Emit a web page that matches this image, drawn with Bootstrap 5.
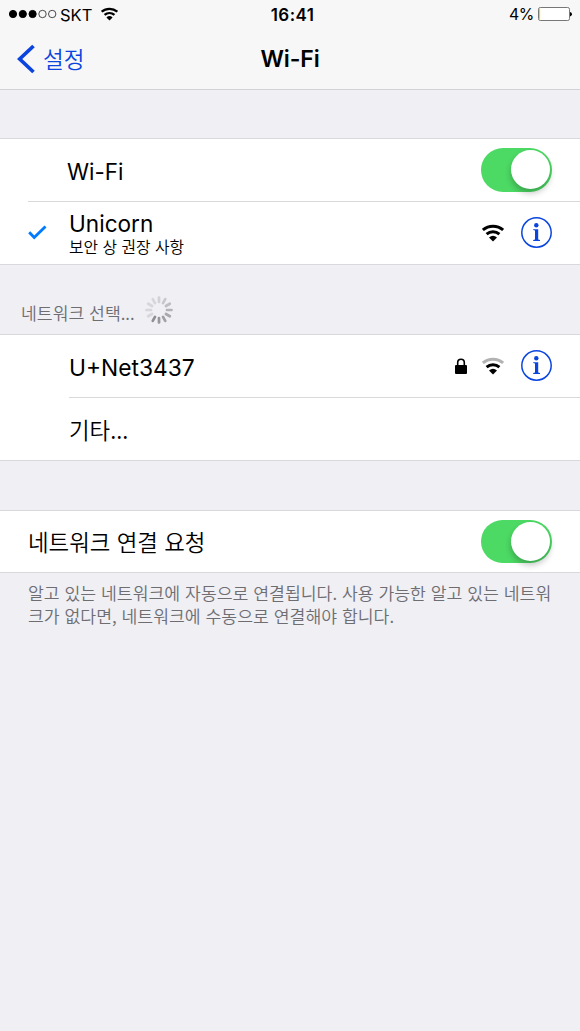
<!DOCTYPE html>
<html lang="ko">
<head>
<meta charset="utf-8">
<meta name="viewport" content="width=device-width, initial-scale=1">
<title>Wi-Fi</title>
<link href="https://cdn.jsdelivr.net/npm/bootstrap@5.3.0/dist/css/bootstrap.min.css" rel="stylesheet">
<style>
body{background:#efeff4;color:#000;font-family:Inter,"Noto Sans CJK KR",sans-serif;overflow:hidden}
svg{display:block;flex:none}
.ko{font-family:"Noto Sans CJK KR DemiLight","Noto Sans CJK KR",sans-serif;font-weight:350}
.topbar{height:90px;background:#f7f7f7;border-bottom:1px solid #d2d2d4}
.status{height:28px;line-height:28px}
.status>div,.titlebar>div{flex:1 1 0}
.carrier{font-size:16.5px;padding-top:1px}
.clock{font-size:17px;letter-spacing:.4px;padding:2px 0 0 5px}
.percent{font-size:15.8px;letter-spacing:-.3px;padding-top:2px}
.titlebar{height:61px;line-height:61px}
.back{color:#0a45e0;font-size:22.5px;text-decoration:none}
.heading{font-size:23px;font-weight:600;letter-spacing:-.1px;padding-top:2px}
.group{background:#fff;border-top:1px solid #d9d9dd;border-bottom:1px solid #d9d9dd;margin-bottom:0}
.cell{height:62px}
.cell-body{border-top:1px solid #d9d9db;height:63px}
.title{font-size:23px;line-height:28px}
.latin{padding-top:4px}
.check-col{width:41px}
.toggle{width:71.5px;height:43.5px;border-radius:22px;background:#4cd964;padding:2.2px;flex:none}
.knob{width:39px;height:39px;border-radius:50%;background:#fff;box-shadow:0 4px 6px rgba(0,0,0,.24)}
.section-title{font-size:17.2px;line-height:24px;color:#6d6d72}
.note{font-size:17.23px;line-height:22.5px;color:#6d6d72}
.end-icon{margin:-1px 28px 0 17px}
</style>
</head>
<body>
<svg width="0" height="0" class="position-absolute">
  <defs>
    <g id="waves" fill="none" stroke-width="3">
      <path d="M4.6 10.2a9.8 9.8 0 0 1 12.8 0"/>
      <path d="M11 17.4 7 13.5q4-3.6 8 0Z" fill="#000" stroke="none"/>
    </g>
    <path id="outer" d="M.9 6a15.4 15.4 0 0 1 20.2 0" fill="none" stroke-width="2.9"/>
    <g id="info">
      <circle cx="15.5" cy="15.5" r="14.7" fill="none" stroke="#0a45e0" stroke-width="1.5"/>
      <circle cx="15.3" cy="8.3" r="2.2" fill="#0a45e0"/>
      <path d="M12.2 12.2h5v10.4l1.8.5v.9h-6.8v-.9l1.8-.5v-9l-1.8-.5Z" fill="#0a45e0"/>
    </g>
  </defs>
</svg>

<header class="topbar">
  <div class="status d-flex align-items-center">
    <div class="d-flex align-items-center">
      <svg width="60" height="28" viewBox="0 0 60 28"><g stroke="#000"><g><circle cx="13" cy="14" r="3.6"/><circle cx="22.8" cy="14" r="3.6"/><circle cx="32.6" cy="14" r="3.6"/></g><g fill="none" stroke-width=".7"><circle cx="42.5" cy="14" r="3.7"/><circle cx="52.2" cy="14" r="3.7"/></g></g></svg>
      <span class="carrier">SKT</span>
      <svg style="margin-left:9px" width="17" height="14" viewBox="0 0 22 18" stroke="#000"><use href="#outer"/><use href="#waves"/></svg>
    </div>
    <div class="text-center fw-semibold clock">16:41</div>
    <div class="d-flex align-items-center justify-content-end">
      <span class="percent">4%</span>
      <svg style="margin-left:3px" width="43" height="28" viewBox="0 0 43 28"><rect x="1.5" y="7.5" width="31" height="13" rx="1.8" fill="#fff" stroke="#777" stroke-width="1"/><path d="M2 8h1.1v12H2z" fill="#fc0"/><path d="M33 12q2 .6 2 2.2t-2 2.3z"/></svg>
    </div>
  </div>
  <div class="titlebar d-flex align-items-center">
    <div><a href="#" class="back ko d-flex align-items-center">
      <svg class="ms-3" style="margin-right:7px" width="20" height="32" viewBox="0 0 20 32" fill="none" stroke="currentColor" stroke-width="3.7"><path d="M17.5 3 3.7 16l13.8 13"/></svg><span style="margin-top:-1px">설정</span></a></div>
    <div class="text-center heading">Wi-Fi</div>
    <div></div>
  </div>
</header>

<main>
  <section class="group" style="margin-top:48px">
    <div class="cell d-flex align-items-center">
      <span class="title latin flex-grow-1" style="padding-left:67px;font-size:22.4px">Wi-Fi</span>
      <div class="toggle d-flex justify-content-end"><div class="knob"></div></div>
      <div style="width:28px"></div>
    </div>
    <div class="cell-body d-flex align-items-center" style="margin-left:28px">
      <div class="check-col"><svg width="19" height="16" viewBox="0 0 19 16" fill="none" stroke="#007aff" stroke-width="2.9"><path d="m1.2 7.3 5 5.2L17.5 1.5"/></svg></div>
      <div class="flex-grow-1">
        <div class="title" style="font-size:22.6px;margin-top:-1px">Unicorn</div>
        <div class="ko subtitle" style="font-size:15.8px;line-height:18px">보안 상 권장 사항</div>
      </div>
      <svg style="margin-top:-1px" width="22" height="18" viewBox="0 0 22 18" stroke="#000"><use href="#outer"/><use href="#waves"/></svg>
      <svg class="end-icon" width="31" height="31"><use href="#info"/></svg>
    </div>
  </section>

  <div class="section-title d-flex align-items-end ko" style="height:69px;padding:0 0 9px 21px">
    <span>네트워크 선택...</span>
    <svg style="margin-left:9px" width="30" height="30" viewBox="-15 -15 30 30" stroke="#8e8e93" stroke-width="2.7" stroke-linecap="round">
      <path d="M0-8v-4.5" opacity=".3"/><path d="M0-8v-4.5" transform="rotate(30)" opacity=".4"/><path d="M0-8v-4.5" transform="rotate(60)" opacity=".5"/><path d="M0-8v-4.5" transform="rotate(90)" opacity=".62"/><path d="M0-8v-4.5" transform="rotate(120)" opacity=".72"/><path d="M0-8v-4.5" transform="rotate(150)" opacity=".82"/><path d="M0-8v-4.5" transform="rotate(180)" opacity=".9"/><path d="M0-8v-4.5" transform="rotate(210)"/><path d="M0-8v-4.5" transform="rotate(240)" opacity=".25"/><path d="M0-8v-4.5" transform="rotate(270)" opacity=".25"/><path d="M0-8v-4.5" transform="rotate(300)" opacity=".25"/><path d="M0-8v-4.5" transform="rotate(330)" opacity=".25"/>
    </svg>
  </div>

  <section class="group">
    <div class="cell d-flex align-items-center" style="padding-left:69px">
      <span class="title latin flex-grow-1" style="font-size:22.8px">U+Net3437</span>
      <svg width="12" height="16" viewBox="0 0 12 16"><path d="M2.7 8V4.6a3.3 3.3 0 0 1 6.6 0V8" fill="none" stroke="#000" stroke-width="1.6"/><rect y="7" width="12" height="9" rx="1"/></svg>
      <svg style="margin:-1px 0 0 15px" width="22" height="18" viewBox="0 0 22 18"><use href="#outer" stroke="#b2b2b2"/><use href="#waves" stroke="#000"/></svg>
      <svg class="end-icon" width="31" height="31"><use href="#info"/></svg>
    </div>
    <div class="cell-body d-flex align-items-center" style="margin-left:69px">
      <span class="title ko" style="font-size:22.4px">기타...</span>
    </div>
  </section>

  <section class="group" style="margin-top:49px">
    <div class="cell d-flex align-items-center" style="height:61px;padding:0 28px">
      <span class="title ko flex-grow-1" style="font-size:22.4px;margin-top:-2px">네트워크 연결 요청</span>
      <div class="toggle d-flex justify-content-end"><div class="knob"></div></div>
    </div>
  </section>
  <p class="note ko mb-0" style="padding:9px 0 0 28px">알고 있는 네트워크에 자동으로 연결됩니다. 사용 가능한 알고 있는 네트워<br>크가 없다면, 네트워크에 수동으로 연결해야 합니다.</p>
</main>
<script src="https://cdn.jsdelivr.net/npm/bootstrap@5.3.0/dist/js/bootstrap.bundle.min.js"></script>
</body>
</html>
